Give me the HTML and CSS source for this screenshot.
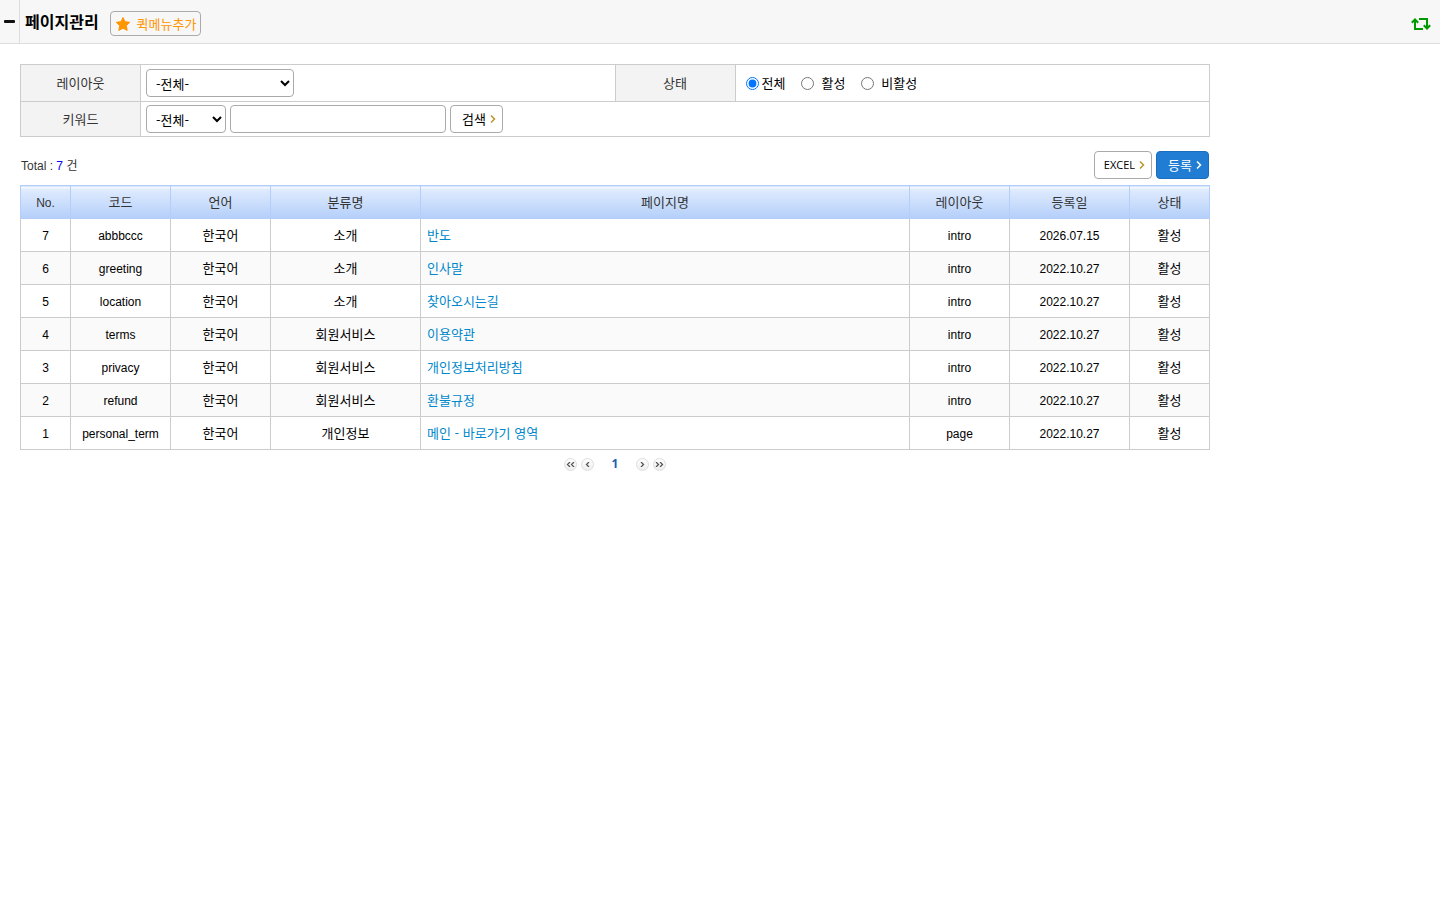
FILE: index.html
```html
<!DOCTYPE html>
<html lang="ko">
<head>
  <meta charset="UTF-8">
  <meta name="viewport" content="width=device-width, initial-scale=1.0">
  <title>페이지관리</title>
  <link rel="stylesheet" href="styles.css">
</head>
<body>
  <header class="topbar">
    <button type="button" class="menu-toggle" aria-label="메뉴 닫기">
      <svg width="11" height="3" viewBox="0 0 11 3"><rect width="11" height="3" rx="1" fill="#111"/></svg>
    </button>
    <h1>페이지관리</h1>
    <button type="button" class="quick-btn">
      <svg width="14" height="14" viewBox="0 0 14 14"><path d="M7 .5l2 4.200 4.700.6-3.400 3.300.9 4.800L7 11.200l-4.200 2.200.9-4.800L.3 5.300 5 4.700z" fill="#ff9500" stroke="#ff9500" stroke-linejoin="round"/></svg>
      <span>퀵메뉴추가</span>
    </button>
    <a href="#" class="refresh" aria-label="새로고침">
      <svg width="20" height="12" viewBox="0 0 20 12">
        <path d="M4 2v9h8M8 1h8v9" fill="none" stroke="#090" stroke-width="2"/>
        <path d="M.8 4.700L4 1.500l3.200 3.200M12.800 7.300L16 10.500l3.200-3.200" fill="none" stroke="#090" stroke-width="2"/>
      </svg>
    </a>
  </header>

  <main class="content">
    <form>
      <table class="search">
        <colgroup>
          <col class="w120"><col><col class="w120"><col>
        </colgroup>
        <tr class="first">
          <th><label for="layout">레이아웃</label></th>
          <td>
            <div class="controls">
              <select id="layout" class="wide"><option>-전체-</option></select>
            </div>
          </td>
          <th>상태</th>
          <td>
            <div class="radios">
              <label><input type="radio" name="state" checked>전체</label>
              <label class="spaced"><input type="radio" name="state">활성</label>
              <label class="spaced"><input type="radio" name="state">비활성</label>
            </div>
          </td>
        </tr>
        <tr>
          <th><label for="keyword">키워드</label></th>
          <td colspan="3">
            <div class="controls">
              <select aria-label="검색 항목"><option>-전체-</option></select>
              <input type="text" id="keyword">
              <button type="button" class="btn">검색
                <svg width="6" height="8" viewBox="0 0 6 8"><path d="M1 .5L4.500 4 1 7.500"/></svg>
              </button>
            </div>
          </td>
        </tr>
      </table>
    </form>

    <div class="list-top">
      <p class="total">Total : <span>7</span> 건</p>
      <div class="actions">
        <button type="button" class="btn excel">EXCEL
          <svg width="6" height="8" viewBox="0 0 6 8"><path d="M1 .5L4.500 4 1 7.500"/></svg>
        </button>
        <button type="button" class="btn primary">등록
          <svg width="6" height="8" viewBox="0 0 6 8"><path d="M1 .5L4.500 4 1 7.500"/></svg>
        </button>
      </div>
    </div>

    <table class="list">
      <colgroup>
        <col class="w50"><col class="w100"><col class="w100"><col class="w150"><col><col class="w100"><col class="w120"><col class="w80">
      </colgroup>
      <thead>
        <tr>
          <th class="en">No.</th><th>코드</th><th>언어</th><th>분류명</th><th>페이지명</th><th>레이아웃</th><th>등록일</th><th>상태</th>
        </tr>
      </thead>
      <tbody>
        <tr>
          <td class="en">7</td><td class="en">abbbccc</td><td>한국어</td><td>소개</td>
          <td class="name"><a href="#">반도</a></td>
          <td class="en">intro</td><td class="en">2026.07.15</td><td>활성</td>
        </tr>
        <tr>
          <td class="en">6</td><td class="en">greeting</td><td>한국어</td><td>소개</td>
          <td class="name"><a href="#">인사말</a></td>
          <td class="en">intro</td><td class="en">2022.10.27</td><td>활성</td>
        </tr>
        <tr>
          <td class="en">5</td><td class="en">location</td><td>한국어</td><td>소개</td>
          <td class="name"><a href="#">찾아오시는길</a></td>
          <td class="en">intro</td><td class="en">2022.10.27</td><td>활성</td>
        </tr>
        <tr>
          <td class="en">4</td><td class="en">terms</td><td>한국어</td><td>회원서비스</td>
          <td class="name"><a href="#">이용약관</a></td>
          <td class="en">intro</td><td class="en">2022.10.27</td><td>활성</td>
        </tr>
        <tr>
          <td class="en">3</td><td class="en">privacy</td><td>한국어</td><td>회원서비스</td>
          <td class="name"><a href="#">개인정보처리방침</a></td>
          <td class="en">intro</td><td class="en">2022.10.27</td><td>활성</td>
        </tr>
        <tr>
          <td class="en">2</td><td class="en">refund</td><td>한국어</td><td>회원서비스</td>
          <td class="name"><a href="#">환불규정</a></td>
          <td class="en">intro</td><td class="en">2022.10.27</td><td>활성</td>
        </tr>
        <tr>
          <td class="en">1</td><td class="en">personal_term</td><td>한국어</td><td>개인정보</td>
          <td class="name"><a href="#">메인 - 바로가기 영역</a></td>
          <td class="en">page</td><td class="en">2022.10.27</td><td>활성</td>
        </tr>
      </tbody>
    </table>

    <nav class="paging" aria-label="페이지">
      <a href="#" aria-label="처음"><svg width="9" height="5" viewBox="0 0 9 5"><path d="M4 0L1.500 2.500 4 5M8 0L5.500 2.500 8 5"/></svg></a>
      <a href="#" aria-label="이전"><svg width="5" height="5" viewBox="0 0 5 5"><path d="M4 0L1.500 2.500 4 5"/></svg></a>
      <strong>1</strong>
      <a href="#" aria-label="다음"><svg width="5" height="5" viewBox="0 0 5 5"><path d="M1 0l2.500 2.500L1 5"/></svg></a>
      <a href="#" aria-label="마지막"><svg width="9" height="5" viewBox="0 0 9 5"><path d="M1 0l2.500 2.500L1 5M5 0l2.500 2.500L5 5"/></svg></a>
    </nav>
  </main>
</body>
</html>
```

FILE: styles.css
```css
* {
  box-sizing: border-box;
}
body {
  margin: 0;
  background-color: #fff;
  color: #000;
  font-family: "Noto Sans CJK KR", sans-serif;
  font-size: 13px;
  line-height: 18px;
}
button, select, input {
  font-family: inherit;
  font-size: 13px;
}
a {
  color: #08c;
  text-decoration: none;
}

/* top bar */
.topbar {
  display: flex;
  align-items: center;
  height: 44px;
  padding-right: 9px;
  background-color: #f7f7f7;
  border-bottom: 1px solid #ddd;
}
.menu-toggle {
  display: flex;
  align-items: center;
  align-self: stretch;
  width: 20px;
  padding: 0 4px;
  background: none;
  border: none;
  border-right: 1px solid #ddd;
}
.topbar h1 {
  margin: 0 11px 2px 5px;
  font-size: 16px;
  line-height: 24px;
}
.quick-btn {
  display: flex;
  align-items: center;
  gap: 7px;
  height: 25px;
  margin-top: 4px;
  padding: 0 4px 0 5px;
  background-color: #f7f7f7;
  border: 1px solid #aaa;
  border-radius: 4px;
  color: #ff9500;
}
.refresh {
  display: flex;
  margin-top: 4px;
  margin-left: auto;
}

.content {
  max-width: 1230px;
  padding: 20px;
}
table {
  width: 100%;
  border-collapse: collapse;
  table-layout: fixed;
}
th {
  font-weight: normal;
  color: #333;
}
.w50 { width: 50px; }
.w80 { width: 80px; }
.w100 { width: 100px; }
.w120 { width: 120px; }
.w150 { width: 150px; }

/* search form */
.search th,
.search td {
  height: 35px;
  padding: 3px 5px;
  border: 1px solid #ccc;
}
.search .first td {
  height: 37px;
}
.search th {
  background-color: #f3f3f3;
}
.controls {
  display: flex;
  gap: 4px;
}
select,
input[type="text"] {
  height: 28px;
  background-color: #fff;
  border: 1px solid #aaa;
  border-radius: 4px;
}
select {
  width: 80px;
  padding: 0 0 0 5px;
  color: #000;
}
select.wide {
  width: 148px;
}
input[type="text"] {
  width: 216px;
}
.radios {
  display: flex;
  gap: 16px;
  padding-left: 5px;
}
.radios label {
  display: flex;
  align-items: center;
  gap: 3px;
}
.radios .spaced {
  gap: 7px;
}
.radios input {
  width: 13px;
  height: 13px;
  margin: 0;
}

.btn {
  display: flex;
  align-items: center;
  gap: 4px;
  height: 28px;
  padding: 0 6px 1px 11px;
  background-color: #fff;
  border: 1px solid #aaa;
  border-radius: 4px;
  color: #000;
}
.btn path {
  fill: none;
  stroke: #b8962e;
  stroke-width: 1.5;
}
.btn.excel {
  padding-left: 9px;
  font-family: "Open Sans", sans-serif;
  font-size: 11px;
}
.btn.primary {
  background-color: #217dd4;
  border-color: #1b6dbd;
  color: #fff;
}
.btn.primary path {
  stroke: #fff;
}

/* list */
.list-top {
  display: flex;
  align-items: center;
  justify-content: space-between;
  margin: 14px 0 6px;
}
.total {
  margin: 2px 0 0 1px;
  color: #333;
  font-family: "Liberation Sans", "Noto Sans CJK KR", sans-serif;
  font-size: 12px;
}
.total span {
  color: #00f;
}
.actions {
  display: flex;
  gap: 4px;
  padding-right: 1px;
}
.list th,
.list td {
  height: 33px;
  padding: 0 6px;
  border: 1px solid #ccc;
  text-align: center;
}
.list th {
  border-color: #b3cff9;
  background: linear-gradient(#fff, #dfebfe 3px, #b4cffa);
}
.list tbody tr:nth-child(even) {
  background-color: #fafafa;
}
.list .en {
  padding-top: 1px;
  font-family: "Liberation Sans", sans-serif;
  font-size: 12px;
}
.list .name {
  text-align: left;
}

.paging {
  display: flex;
  align-items: center;
  justify-content: center;
  gap: 4px;
  margin-top: 5px;
}
.paging a {
  display: flex;
  align-items: center;
  justify-content: center;
  width: 13px;
  height: 13px;
  border: 1px solid #ddd;
  border-radius: 50%;
  background: linear-gradient(#fff, #eee);
}
.paging svg {
  flex-shrink: 0;
}
.paging path {
  fill: none;
  stroke: #555;
  stroke-width: 1.3;
}
.paging strong {
  margin: 0 14px;
  color: #1a5fb4;
  font-family: "Noto Sans", sans-serif;
  font-size: 12px;
}
```
